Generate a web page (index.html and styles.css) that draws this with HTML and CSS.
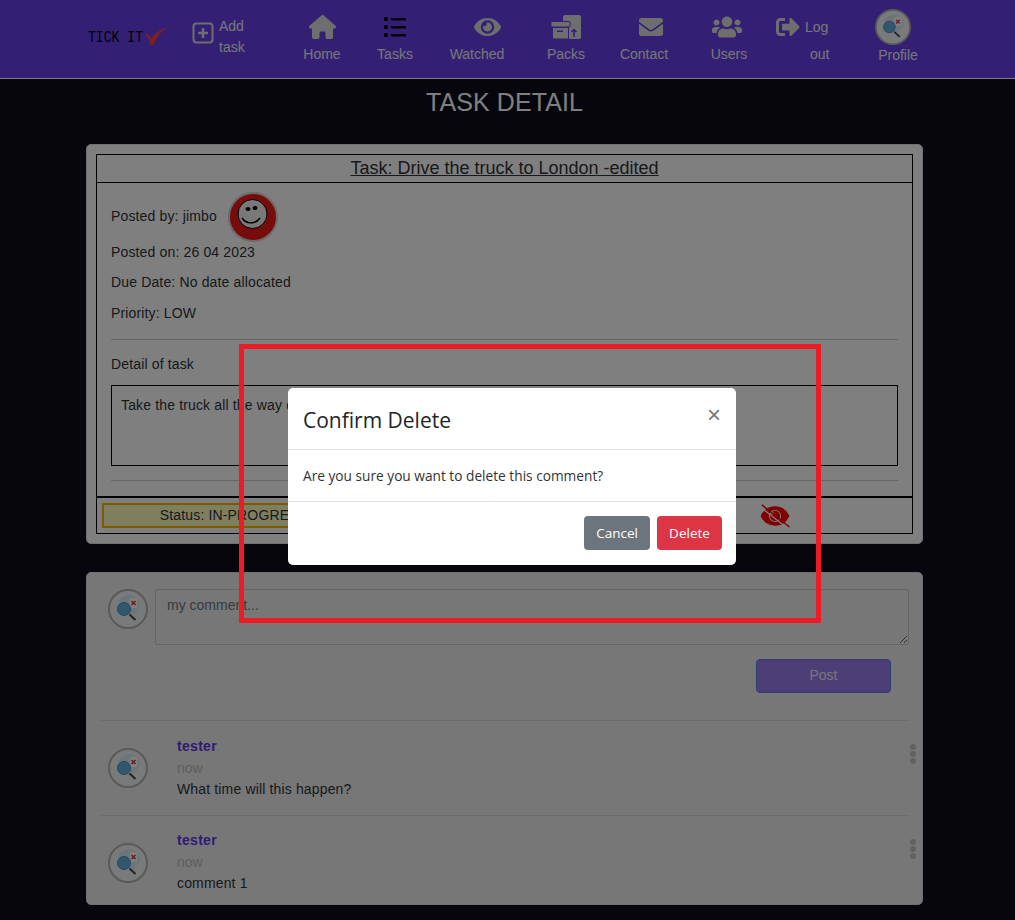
FILE: index.html
```html
<!DOCTYPE html>
<html lang="en">

<head>
  <meta charset="UTF-8">
  <meta name="viewport" content="width=device-width, initial-scale=1.0">
  <title>Task Detail</title>

  <link rel="stylesheet" href="styles.css">
</head>

<body>
  <svg class="defs" width="0" height="0">
    <symbol id="tester-pic" viewBox="0 0 40 40">
      <circle cx="20" cy="20" r="19" fill="#f3f4f4" stroke="#b4b4b4" stroke-width="2" />
      <ellipse cx="21" cy="16" rx="11" ry="10" fill="#d8ebf5" />
      <rect x="21.500" y="9" width="8" height="10" rx="2" fill="#fff" />
      <path d="M23.500 12l4 4M27.500 12l-4 4" stroke="#d33" stroke-width="1.500" />
      <circle cx="16" cy="20" r="6.500" fill="#62aede" stroke="#4a90bc" />
      <path d="M21.500 25.500l6 5.500" stroke="#3a4650" stroke-width="2" />
    </symbol>
  </svg>

  <nav class="navbar">
    <div class="logo"><span>TICK IT</span>
      <svg width="22" height="17" viewBox="0 0 22 17">
        <path d="M0 6c3-1 5 2 6 5C9 6 15 1 22 0 15 4 11 10 8.500 17H5C5 13 3 9 0 6z" fill="#f84040" />
      </svg>
    </div>

    <a class="add-task">
      <svg width="22" height="22" viewBox="0 0 22 22">
        <rect x="1.500" y="1.500" width="19" height="19" rx="3" fill="none" stroke="#dcdcdc" stroke-width="2" />
        <path d="M11 6v10M6 11h10" stroke="#dcdcdc" stroke-width="2.500" />
      </svg>
      <span>Add<br>task</span>
    </a>

    <a class="nav-item home">
      <svg width="27" height="24" viewBox="0 0 576 512">
        <path fill="#dcdcdc" d="M575.800 255.500c0 18-15 32.100-32 32.100h-32l.7 160.200c0 2.700-.2 5.400-.5 8.100V472c0 22.100-17.900 40-40 40H392c-22.100 0-40-17.900-40-40V384c0-17.700-14.300-32-32-32H256c-17.700 0-32 14.300-32 32v88c0 22.100-17.900 40-40 40H104c-22.100 0-40-17.900-40-40V360c0-.9 0-1.900 .1-2.800V287.600H32c-18 0-32-14-32-32.100c0-9 3-17 10-24L266.400 8c7-7 15-8 22-8s15 2 21 7L564.800 231.500c8 7 12 15 11 24z" />
      </svg>
      <span>Home</span>
    </a>

    <a class="nav-item tasks">
      <svg width="24" height="24" viewBox="0 0 24 24">
        <rect x="1" y="2" width="4" height="4" rx="1" fill="#000" />
        <rect x="1" y="10" width="4" height="4" rx="1" fill="#000" />
        <rect x="1" y="18" width="4" height="4" rx="1" fill="#000" />
        <rect x="8" y="3" width="15" height="2.500" rx="1" fill="#000" />
        <rect x="8" y="11" width="15" height="2.500" rx="1" fill="#000" />
        <rect x="8" y="19" width="15" height="2.500" rx="1" fill="#000" />
      </svg>
      <span>Tasks</span>
    </a>

    <a class="nav-item watched">
      <svg width="27" height="24" viewBox="0 0 576 512">
        <path fill="#dcdcdc" d="M572.520 241.400C518.290 135.590 410.930 64 288 64S57.680 135.640 3.480 241.410a32.350 32.350 0 0 0 0 29.190C57.710 376.410 165.070 448 288 448s230.320-71.640 284.520-177.410a32.350 32.350 0 0 0 0-29.190zM288 400a144 144 0 1 1 144-144 143.930 143.930 0 0 1-144 144zm0-240a95.310 95.310 0 0 0-25.310 3.790 47.850 47.850 0 0 1-66.900 66.900A95.780 95.780 0 1 0 288 160z" />
      </svg>
      <span>Watched</span>
    </a>

    <a class="nav-item packs">
      <svg width="30" height="24" viewBox="0 0 30 24">
        <rect x="12" y="0" width="18" height="24" rx="2" fill="#dcdcdc" />
        <rect x="0" y="6.500" width="19" height="5.500" rx="1" fill="#dcdcdc" stroke="#6640ea" stroke-width="1" />
        <rect x="1.500" y="12.500" width="16" height="11.500" fill="#dcdcdc" stroke="#6640ea" stroke-width="1" />
        <rect x="6" y="15.500" width="6" height="1.500" fill="#6640ea" />
        <path d="M23 22v-7M20.500 17l2.500-2.500 2.500 2.500" fill="none" stroke="#6640ea" stroke-width="1.500" />
      </svg>
      <span>Packs</span>
    </a>

    <a class="nav-item contact">
      <svg width="24" height="24" viewBox="0 0 512 512">
        <path fill="#dcdcdc" d="M502.300 190.800c3.900-3.100 9.700-.2 9.700 4.700V400c0 26.500-21.500 48-48 48H48c-26.500 0-48-21.500-48-48V195.600c0-5 5.700-7.800 9.700-4.700 22.400 17.400 52.100 39.500 154.100 113.600 21.100 15.400 56.700 47.800 92.200 47.600 35.700.3 72-32.800 92.300-47.600 102-74.100 131.600-96.300 154-113.700zM256 320c23.200.4 56.600-29.200 73.400-41.400 132.700-96.300 142.800-104.700 173.400-128.700 5.800-4.500 9.200-11.500 9.200-18.900v-19c0-26.500-21.500-48-48-48H48C21.500 64 0 85.500 0 112v19c0 7.400 3.400 14.300 9.200 18.900 30.600 23.900 40.700 32.400 173.400 128.700 16.800 12.200 50.200 41.800 73.400 41.400z" />
      </svg>
      <span>Contact</span>
    </a>

    <a class="nav-item users">
      <svg width="30" height="24" viewBox="0 0 640 512">
        <path fill="#dcdcdc" d="M96 224c35.300 0 64-28.700 64-64s-28.700-64-64-64-64 28.700-64 64 28.700 64 64 64zm448 0c35.300 0 64-28.700 64-64s-28.700-64-64-64-64 28.700-64 64 28.700 64 64 64zm32 32h-64c-17.600 0-33.500 7.100-45.100 18.600 40.300 22.100 68.900 62 75.100 109.400h66c17.700 0 32-14.300 32-32v-32c0-35.300-28.700-64-64-64zm-256 0c61.900 0 112-50.100 112-112S381.900 32 320 32 208 82.100 208 144s50.100 112 112 112zm76.800 32h-8.300c-20.800 10-43.900 16-68.500 16s-47.600-6-68.500-16h-8.300C179.600 288 128 339.600 128 403.200V432c0 26.500 21.500 48 48 48h288c26.500 0 48-21.500 48-48v-28.800c0-63.600-51.600-115.200-115.200-115.200zm-223.700-13.400C161.500 263.100 145.600 256 128 256H64c-35.300 0-64 28.700-64 64v32c0 17.700 14.300 32 32 32h65.900c6.300-47.400 34.900-87.300 75.200-109.400z" />
      </svg>
      <span>Users</span>
    </a>

    <a class="logout">
      <svg width="24" height="24" viewBox="0 0 512 512">
        <path fill="#dcdcdc" d="M497 273L329 441c-15 15-41 4.500-41-17v-96H152c-13.300 0-24-10.700-24-24v-96c0-13.300 10.700-24 24-24h136V88c0-21.400 25.900-32 41-17l168 168c9.300 9.400 9.300 24.600 0 34zM192 436v-40c0-6.600-5.400-12-12-12H96c-17.700 0-32-14.300-32-32V160c0-17.700 14.300-32 32-32h84c6.600 0 12-5.400 12-12V76c0-6.600-5.400-12-12-12H96c-53 0-96 43-96 96v192c0 53 43 96 96 96h84c6.600 0 12-5.400 12-12z" />
      </svg>
      <span class="log">Log</span>
      <span class="out">out</span>
    </a>

    <a class="nav-item profile">
      <svg width="36" height="36"><use href="#tester-pic" /></svg>
      <span>Profile</span>
    </a>
  </nav>

  <h1 class="page-title">TASK DETAIL</h1>

  <main class="content">
    <section class="card task-card">
      <div class="task-box">
        <h2 class="task-title">Task: Drive the truck to London -edited</h2>

        <div class="task-body">
          <div class="posted-by">
            <span>Posted by: jimbo</span>
            <svg width="50" height="50" viewBox="0 0 50 50">
              <circle cx="25" cy="25" r="24" fill="#f01818" stroke="#d4d4d4" stroke-width="2" />
              <circle cx="24.500" cy="22" r="14.500" fill="#f2f2f2" stroke="#000" />
              <ellipse cx="20" cy="17" rx="2.500" ry="2" fill="#000" />
              <ellipse cx="27" cy="16" rx="2.500" ry="2" fill="#000" />
              <path d="M14 26c4 6 13 7 18 0" fill="none" stroke="#000" stroke-width="1.500" />
            </svg>
          </div>
          <p class="info">Posted on: 26 04 2023</p>
          <p class="info due">Due Date: No date allocated</p>
          <p class="info">Priority: LOW</p>
          <hr class="line first-line">
          <p class="detail-label">Detail of task</p>
          <div class="detail-box">Take the truck all the way down to London</div>
          <hr class="line">
        </div>

        <div class="task-footer">
          <div class="status">Status: IN-PROGRESS</div>
          <svg class="unwatch" width="30" height="24" viewBox="0 0 640 512">
            <path transform="translate(32 0)" fill="#f00" stroke="#f00" stroke-width="28" d="M572.520 241.400C518.290 135.590 410.930 64 288 64S57.680 135.640 3.480 241.410a32.350 32.350 0 0 0 0 29.190C57.710 376.410 165.070 448 288 448s230.320-71.640 284.520-177.410a32.350 32.350 0 0 0 0-29.190zM288 400a144 144 0 1 1 144-144 143.930 143.930 0 0 1-144 144zm0-240a95.310 95.310 0 0 0-25.310 3.790 47.850 47.850 0 0 1-66.900 66.900A95.780 95.780 0 1 0 288 160z" />
            <path d="M20 70L570 510" stroke="#fff" stroke-width="26" />
            <path d="M40 20L630 490" stroke="#f00" stroke-width="32" />
          </svg>
        </div>
      </div>
    </section>

    <section class="card comments-card">
      <form class="comment-form">
        <svg width="40" height="40"><use href="#tester-pic" /></svg>
        <textarea class="comment-input" placeholder="my comment..."></textarea>
      </form>
      <div class="post-row"><button class="post-btn" type="button">Post</button></div>

      <div class="comment">
        <svg width="40" height="40"><use href="#tester-pic" /></svg>
        <div class="comment-text">
          <div class="author">tester</div>
          <div class="time">now</div>
          <div class="message">What time will this happen?</div>
        </div>
        <div class="dots"><i></i><i></i><i></i></div>
      </div>

      <div class="comment">
        <svg width="40" height="40"><use href="#tester-pic" /></svg>
        <div class="comment-text">
          <div class="author">tester</div>
          <div class="time">now</div>
          <div class="message">comment 1</div>
        </div>
        <div class="dots"><i></i><i></i><i></i></div>
      </div>
    </section>
  </main>

  <div class="backdrop"></div>

  <div class="modal">
    <div class="modal-header">
      <h3>Confirm Delete</h3>
      <span class="close">&times;</span>
    </div>
    <div class="modal-body">Are you sure you want to delete this comment?</div>
    <div class="modal-footer">
      <button class="btn btn-cancel" type="button">Cancel</button>
      <button class="btn btn-delete" type="button">Delete</button>
    </div>
  </div>

  <div class="red-frame"></div>
</body>

</html>
```

FILE: styles.css
```css
* {
  box-sizing: border-box;
}

body {
  font-family: "Liberation Sans", Arial, sans-serif;
  font-size: 14px;
  background-color: #100c1a;
  color: #2f3338;
  margin: 0;
  height: 920px;
  overflow: hidden;
}

.defs {
  position: absolute;
}

/* nav */
.navbar {
  display: flex;
  height: 79px;
  padding-left: 88px;
  background-color: #6640ea;
  border-bottom: 1px solid #fff;
  color: #eee;
}

.logo {
  display: flex;
  width: 104px;
  height: 50px;
  padding-top: 28px;
  color: #000;
}

.logo span {
  display: block;
  width: 55px;
  height: 18px;
  padding-top: 1px;
  font-family: "Liberation Mono", monospace;
  font-size: 17px;
  line-height: 18px;
  white-space: nowrap;
  transform: scaleX(0.77);
  transform-origin: left top;
}

.logo svg {
  margin-left: 2px;
}

.add-task {
  display: flex;
  width: 95px;
  padding-top: 16px;
  line-height: 21px;
}

.add-task svg {
  margin: 6px 4px 0 0;
}

.add-task span {
  padding-left: 1px;
}

.nav-item {
  display: flex;
  flex-direction: column;
  align-items: center;
  padding-top: 15px;
}

.nav-item svg {
  margin-bottom: 7px;
}

.home { width: 70px; }
.tasks { width: 76px; }
.watched { width: 88px; }
.packs { width: 90px; }
.contact { width: 66px; }
.users { width: 90px; margin-left: 7px; }

.watched svg { margin-left: 20px; }
.contact svg { margin-left: 14px; }
.users svg { margin-left: -4px; }

.logout {
  display: grid;
  grid-template-columns: 29px auto;
  width: 99px;
  margin-left: 2px;
  padding-top: 15px;
  grid-template-rows: 24px auto;
}

.logout .log {
  line-height: 24px;
}

.logout .out {
  grid-column: 2;
  padding: 7px 0 0 5px;
}

.profile {
  width: 36px;
  padding-top: 9px;
}

.profile svg {
  margin-bottom: 2px;
}

.profile span {
  margin-left: 10px;
}

.page-title {
  margin: 9px 0 28px;
  padding-right: 6px;
  text-align: center;
  font-size: 25px;
  font-weight: 400;
  line-height: 28px;
  letter-spacing: 0.1px;
  color: #fff;
}

/* cards */
.content {
  padding: 0 92px 0 86px;
}

.card {
  background-color: #fff;
  border: 1px solid #e0e0e0;
  border-radius: 5px;
}

.task-card {
  height: 400px;
  padding: 9px;
  margin-bottom: 28px;
}

.task-box {
  height: 380px;
  border: 1px solid #000;
}

.task-title {
  margin: 0;
  height: 28px;
  border-bottom: 1px solid #000;
  font-size: 18px;
  font-weight: 400;
  line-height: 26px;
  text-align: center;
  text-decoration: underline;
}

.task-body {
  height: 313px;
  padding: 9px 14px 0;
  letter-spacing: 0.15px;
}

.posted-by {
  display: flex;
  align-items: center;
  gap: 11px;
  height: 50px;
}

.posted-by span {
  margin-top: -2px;
}

.info {
  margin: 0 0 14px;
  line-height: 16px;
}

.info.due {
  margin-bottom: 15px;
}

.posted-by + .info {
  margin-top: 2px;
}

.line {
  margin: 0;
  border: 0;
  border-top: 1px solid #ccc;
}

.first-line {
  margin-top: 18px;
}

.detail-label {
  margin: 16px 0 13px;
  line-height: 16px;
}

.detail-box {
  height: 81px;
  padding: 11px 9px;
  border: 1px solid #000;
  margin-bottom: 14px;
}

.task-footer {
  display: flex;
  align-items: center;
  height: 37px;
  padding-left: 5px;
  border-top: 2px solid #000;
  letter-spacing: 0.15px;
}

.status {
  width: 264px;
  height: 25px;
  line-height: 21px;
  text-align: center;
  background-color: #ffffc0;
  border: 2px solid #f7b500;
}

.unwatch {
  margin-left: 394px;
}

.comments-card {
  height: 333px;
  padding: 16px 13px 0 14px;
  background-color: #efefef;
}

.comment-form {
  display: flex;
  align-items: flex-start;
  gap: 7px;
  padding-left: 7px;
}

.comment-input {
  flex: 1;
  height: 56px;
  padding: 7px 11px;
  font-family: inherit;
  font-size: 14px;
  background-color: #efefef;
  border: 1px solid #ccc;
  border-radius: 2px;
}

.comment-input::placeholder {
  color: #6c757d;
}

.post-row {
  display: flex;
  justify-content: flex-end;
  padding: 14px 18px 27px 0;
  border-bottom: 1px solid #d8d8d8;
}

.post-btn {
  width: 135px;
  height: 34px;
  padding-bottom: 3px;
  font-family: inherit;
  font-size: 14px;
  color: #eee;
  background-color: #9a7cf0;
  border: 1px solid #5b7fd0;
  border-radius: 4px;
}

.comment {
  display: flex;
  height: 95px;
  padding: 27px 0 0 7px;
  position: relative;
  border-bottom: 1px solid #d8d8d8;
}

.comment:last-child {
  border-bottom: 0;
}

.comment-text {
  padding: 0 0 0 29px;
  margin-top: -12px;
  line-height: 21.500px;
}

.comment:last-child .comment-text {
  margin-top: -13px;
}

.author {
  font-weight: 700;
  letter-spacing: 0.3px;
  color: #5f35e8;
}

.time {
  color: #bbb;
}

.message {
  letter-spacing: 0.15px;
}

.dots {
  position: absolute;
  top: 23px;
  right: -7px;
}

.dots i {
  display: block;
  width: 6px;
  height: 6px;
  margin-bottom: 1px;
  border-radius: 50%;
  background-color: #c4c4c8;
}

/* modal */
.backdrop {
  position: fixed;
  top: 0;
  left: 0;
  right: 0;
  bottom: 0;
  background-color: rgba(0, 0, 0, 0.5);
}

.modal {
  position: absolute;
  top: 388px;
  left: 288px;
  width: 448px;
  height: 177px;
  background-color: #fff;
  border-radius: 5px;
  font-family: "Open Sans", sans-serif;
  color: #212529;
}

.modal-header {
  display: flex;
  justify-content: space-between;
  height: 62px;
  padding: 15px 15px 0;
  border-bottom: 1px solid #dee2e6;
}

.modal-header h3 {
  margin: 0;
  font-size: 21px;
  font-weight: 400;
  line-height: 34px;
}

.close {
  font-family: "Liberation Sans", sans-serif;
  font-size: 24px;
  line-height: 24px;
  color: #777;
}

.modal-body {
  height: 52px;
  padding: 0 15px;
  line-height: 52px;
  font-size: 13.700px;
  color: #333;
  border-bottom: 1px solid #dee2e6;
}

.modal-footer {
  display: flex;
  justify-content: flex-end;
  gap: 7px;
  padding: 14px 14px 0 0;
}

.btn {
  height: 34px;
  font-family: inherit;
  font-size: 13.500px;
  color: #fff;
  border: 0;
  border-radius: 4px;
}

.btn-cancel {
  width: 66px;
  background-color: #6c757d;
}

.btn-delete {
  width: 65px;
  background-color: #dc3545;
}

.red-frame {
  position: absolute;
  top: 344px;
  left: 239px;
  width: 582px;
  height: 279px;
  border: 5px solid #ed1c24;
}
```
